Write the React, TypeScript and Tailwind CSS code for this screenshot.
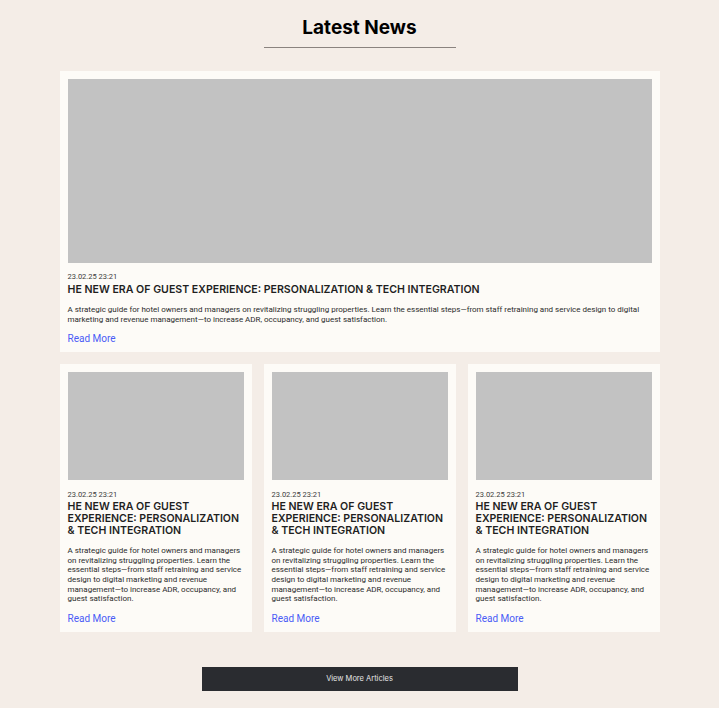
import React from "react";

interface Article {
    date: string;
    title: string;
    excerpt: string;
}

const article: Article = {
    date: "23.02.25 23:21",
    title: "HE NEW ERA OF GUEST EXPERIENCE: PERSONALIZATION & TECH INTEGRATION",
    excerpt:
        "A strategic guide for hotel owners and managers on revitalizing struggling properties. Learn the essential steps—from staff retraining and service design to digital marketing and revenue management—to increase ADR, occupancy, and guest satisfaction.",
};

const heading = { fontFamily: "Inter, 'Open Sans', sans-serif" };
const body = { fontFamily: "Roboto, 'Liberation Sans', sans-serif" };

const ArticleBody = ({ a, featured }: { a: Article; featured?: boolean }) => (
    <div className="flex flex-col">
        <span
            className={featured ? "mt-[9px] text-[7.5px] leading-[10px] text-[#3a3a3a]" : "mt-[10px] text-[7.5px] leading-[10px] text-[#3a3a3a]"}
            style={body}
        >
            {a.date}
        </span>
        <h3
            className={featured ? "mt-[2px] text-[10.6px] font-semibold leading-[12px] text-[#1f1f1f]" : "mt-[1px] text-[10.6px] font-semibold leading-[12px] text-[#1f1f1f]"}
            style={heading}
        >
            {a.title}
        </h3>
        <p className="mt-[9px] text-[8px] leading-[9.6px] text-[#2b2b2b]" style={body}>
            {a.excerpt}
        </p>
        <a href="#" className="mt-[9px] text-[10px] leading-[12px] text-[#4a5cf6]" style={body}>
            Read More
        </a>
    </div>
);

export default function App() {
    return (
        <div className="min-h-[708px] w-full bg-[#f4ede7] pb-[17px]">
            <div className="mx-auto flex w-[600px] flex-col items-center">
                <h2 className="pt-[16px] text-[19px] font-bold leading-[24px] text-black" style={heading}>
                    Latest News
                </h2>
                <div className="mt-[7px] h-px w-[192px] bg-[#8a837f]" />

                <article className="mt-[23px] w-full bg-[#fdfbf7] px-2 pt-2 pb-[7px]">
                    <div className="h-[184px] w-full bg-[#c2c2c2]" />
                    <ArticleBody a={article} featured />
                </article>

                <div className="mt-[12px] grid w-full grid-cols-3 gap-[12px]">
                    {[0, 1, 2].map((i) => (
                        <article key={i} className="bg-[#fdfbf7] px-2 pt-2 pb-[7px]">
                            <div className="h-[108px] w-full bg-[#c2c2c2]" />
                            <ArticleBody a={article} />
                        </article>
                    ))}
                </div>

                <button className="mt-[35px] h-[24px] w-[316px] bg-[#2a2c30] text-[7.5px] text-[#e5e5e5]" style={heading}>
                    View More Articles
                </button>
            </div>
        </div>
    );
}
